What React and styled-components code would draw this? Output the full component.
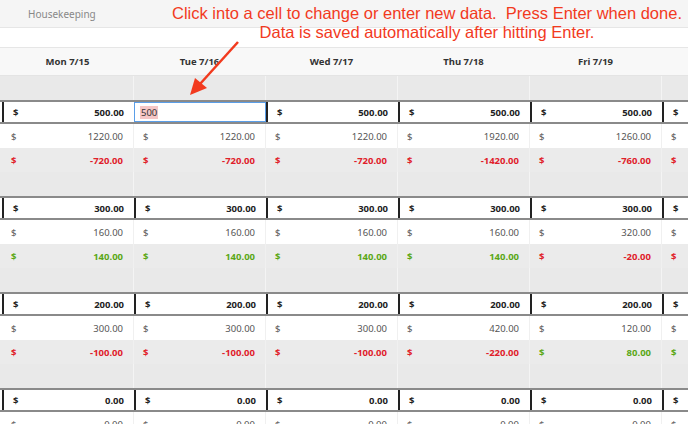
import React from "react";
import styled, { createGlobalStyle, css } from "styled-components";

const Global = createGlobalStyle`
	body { margin: 0; background: #fff; font-family: "Noto Sans", "Liberation Sans", sans-serif; }
`;

const Page = styled.div`
	position: relative;
	width: 688px;
	height: 424px;
	overflow: hidden;
`;

const TopBar = styled.div`
	height: 27px;
	border-bottom: 1px solid #e6e6e6;
	background: #f5f5f5;
	display: flex;
	align-items: center;
	padding-left: 28px;
	font-size: 10px;
	color: #888;
`;

const Blank = styled.div`
	height: 19px;
	border-bottom: 1px solid #e6e6e6;
`;

const Row = styled.div`
	display: flex;
	height: 24px;
	padding-left: 2px;
	box-sizing: border-box;
	${p => p.kind === "header" && css`
		height: 28px;
		background: #f8f8f8;
		border-bottom: 1px solid #e4e4e4;
	`}
	${p => p.kind === "spacer" && css`
		background: #e9e9e9;
	`}
	${p => p.kind === "budget" && css`
		border-top: 2px solid #8a8a8a;
		border-bottom: 2px solid #8a8a8a;
		background: #fff;
	`}
	${p => p.kind === "diff" && css`
		background: #ebebeb;
	`}
`;

const Cell = styled.div`
	flex: 0 0 132px;
	box-sizing: border-box;
	display: flex;
	align-items: center;
	justify-content: space-between;
	padding: 0 10px 0 9px;
	font-size: 9.5px;
	color: ${p => p.color || "#555"};
	font-weight: ${p => (p.bold ? 700 : 400)};
	border-right: 1px solid ${p => (p.kind === "spacer" ? "#f4f4f4" : "#f0f0f0")};
	${p => p.kind === "header" && css`
		justify-content: center;
		color: #333;
		font-weight: 700;
		border-right: none;
	`}
	${p => p.kind === "budget" && css`
		color: #222;
		border-left: 2px solid #222;
		border-right: none;
	`}
`;

const Input = styled.div`
	flex: 0 0 132px;
	box-sizing: border-box;
	border: 1.5px solid #5a9ee8;
	display: flex;
	align-items: center;
	padding-left: 5px;
	font-size: 9.5px;
	color: #333;
	span { background: #f5c6c6; padding: 0 1px; }
`;

const Note = styled.div`
	position: absolute;
	top: 4px;
	left: 162px;
	width: 530px;
	text-align: center;
	color: #f23a1e;
	font-family: "Liberation Sans", Arial, sans-serif;
	font-size: 16.5px;
	line-height: 19px;
`;

const Arrow = styled.svg`
	position: absolute;
	left: 186px;
	top: 40px;
`;

const days = ["Mon 7/15", "Tue 7/16", "Wed 7/17", "Thu 7/18", "Fri 7/19", ""];
const RED = "#e0202a";
const GREEN = "#5aa716";

const groups = [
	{ budget: "500.00", actual: ["1220.00", "1220.00", "1220.00", "1920.00", "1260.00"], diff: ["-720.00", "-720.00", "-720.00", "-1420.00", "-760.00"] },
	{ budget: "300.00", actual: ["160.00", "160.00", "160.00", "160.00", "320.00"], diff: ["140.00", "140.00", "140.00", "140.00", "-20.00"] },
	{ budget: "200.00", actual: ["300.00", "300.00", "300.00", "420.00", "120.00"], diff: ["-100.00", "-100.00", "-100.00", "-220.00", "80.00"] },
	{ budget: "0.00", actual: ["0.00", "0.00", "0.00", "0.00", "0.00"], diff: ["0.00", "0.00", "0.00", "0.00", "0.00"] },
];

const Money = ({ value, ...rest }) => (
	<Cell {...rest}>
		<span>$</span>
		<span>{value}</span>
	</Cell>
);

const App = () => (
	<Page>
		<Global />
		<TopBar>Housekeeping</TopBar>
		<Blank />
		<Row kind="header">
			{days.map((d, i) => <Cell key={i} kind="header">{d}</Cell>)}
		</Row>
		{groups.map((g, gi) => (
			<React.Fragment key={gi}>
				<Row kind="spacer">
					{days.map((_, i) => <Cell key={i} kind="spacer" />)}
				</Row>
				<Row kind="budget">
					{days.map((_, i) =>
						gi === 0 && i === 1 ? (
							<Input key={i}><span>500</span></Input>
						) : (
							<Money key={i} kind="budget" bold value={i < 5 ? g.budget : ""} />
						)
					)}
				</Row>
				<Row kind="actual">
					{days.map((_, i) => <Money key={i} value={i < 5 ? g.actual[i] : ""} />)}
				</Row>
				<Row kind="diff">
					{days.map((_, i) => {
						const v = g.diff[i < 5 ? i : 4];
						return <Money key={i} bold color={v.startsWith("-") ? RED : GREEN} value={i < 5 ? v : ""} />;
					})}
				</Row>
			</React.Fragment>
		))}
		<Note>
			Click into a cell to change or enter new data.&nbsp; Press Enter when done.<br />
			Data is saved automatically after hitting Enter.
		</Note>
		<Arrow width="60" height="60" viewBox="0 0 60 60">
			<line x1="52" y1="2" x2="14" y2="44" stroke="#f23a1e" strokeWidth="2.5" />
			<polygon points="4,55 9,38 21,48" fill="#f23a1e" />
		</Arrow>
	</Page>
);

export default App;
